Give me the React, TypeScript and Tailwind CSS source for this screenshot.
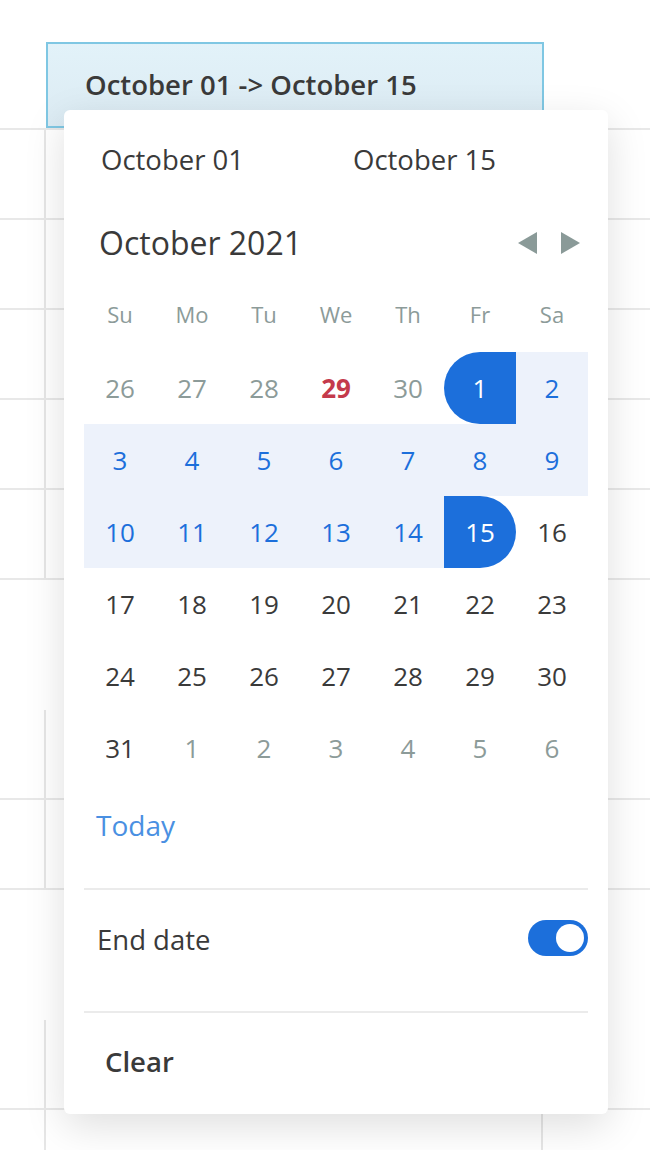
import { ReactNode } from "react"

type Day = {
  n: number
  tone: "muted" | "today" | "normal" | "range" | "start" | "end"
  bg?: boolean
}

const weekdays = ["Su", "Mo", "Tu", "We", "Th", "Fr", "Sa"]

const weeks: Day[][] = [
  [
    { n: 26, tone: "muted" },
    { n: 27, tone: "muted" },
    { n: 28, tone: "muted" },
    { n: 29, tone: "today" },
    { n: 30, tone: "muted" },
    { n: 1, tone: "start" },
    { n: 2, tone: "range", bg: true },
  ],
  [3, 4, 5, 6, 7, 8, 9].map((n) => ({ n, tone: "range" as const, bg: true })),
  [
    ...[10, 11, 12, 13, 14].map((n) => ({ n, tone: "range" as const, bg: true })),
    { n: 15, tone: "end" },
    { n: 16, tone: "normal" },
  ],
  [17, 18, 19, 20, 21, 22, 23].map((n) => ({ n, tone: "normal" as const })),
  [24, 25, 26, 27, 28, 29, 30].map((n) => ({ n, tone: "normal" as const })),
  [
    { n: 31, tone: "normal" },
    ...[1, 2, 3, 4, 5, 6].map((n) => ({ n, tone: "muted" as const })),
  ],
]

const toneClass = {
  muted: "text-[#8c9b99]",
  today: "text-[#c43a4b] font-bold",
  normal: "text-[#3a3a3a]",
  range: "text-[#1c6fdb]",
  start: "bg-[#1c6fdb] text-white rounded-l-full",
  end: "bg-[#1c6fdb] text-white rounded-r-full",
}

const Row = ({
  h,
  line,
  border,
  children,
}: {
  h: string
  line?: boolean
  border?: boolean
  children?: ReactNode
}) => (
  <div className={`flex ${h} ${border ? "border-b-2 border-[#e8e8e8]" : ""}`}>
    <div className={`w-[46px] shrink-0 ${line ? "border-r-2 border-[#e6e6e6]" : ""}`} />
    <div className={`w-[497px] shrink-0 ${line ? "border-r-2 border-[#e6e6e6]" : ""}`}>
      {children}
    </div>
  </div>
)

const App = () => {
  return (
    <div className="relative h-[1150px] w-[650px] overflow-hidden bg-white font-['Open_Sans',sans-serif]">
      {/* table behind the popup */}
      <div className="flex h-[130px] flex-col border-b-2 border-[#e8e8e8] pt-[42px]">
        <div className="ml-[46px] flex h-[88px] w-[498px] items-center border-2 border-[#7fc7e3] bg-gradient-to-b from-[#e2f2f9] to-[#dcebf3] pl-[37px]">
          <span className="text-[27.5px] font-semibold text-[#3a3a3a]">
            October 01 -&gt; October 15
          </span>
        </div>
      </div>
      <Row h="h-[90px]" line border />
      <Row h="h-[90px]" line border />
      <Row h="h-[90px]" line border />
      <Row h="h-[90px]" line border />
      <Row h="h-[90px]" line border />
      <Row h="h-[130px]" />
      <Row h="h-[90px]" line border />
      <Row h="h-[90px]" line border />
      <Row h="h-[130px]" />
      <Row h="h-[90px]" line border />
      <Row h="h-[40px]" line />

      {/* popup */}
      <div className="absolute left-[64px] top-[110px] flex h-[1004px] w-[544px] flex-col rounded-md bg-white px-5 shadow-[0_12px_40px_rgba(0,0,0,0.13)]">
        <div className="flex h-[100px] items-center pl-[17px] text-[27.5px] text-[#3a3a3a]">
          <span className="w-[252px]">October 01</span>
          <span>October 15</span>
        </div>
        <div className="flex h-[66px] items-center justify-between pl-[15px]">
          <span className="text-[32px] text-[#3a3a3a]">October 2021</span>
          <div className="flex items-center gap-[24px] pr-[8px]">
            <svg width="19" height="22" viewBox="0 0 19 22">
              <path d="M19 0 L0 11 L19 22 Z" fill="#8a9a98" />
            </svg>
            <svg width="19" height="22" viewBox="0 0 19 22">
              <path d="M0 0 L19 11 L0 22 Z" fill="#8a9a98" />
            </svg>
          </div>
        </div>
        <div className="grid h-[76px] grid-cols-7 items-center">
          {weekdays.map((d) => (
            <span key={d} className="text-center text-[22px] text-[#8c9b99]">
              {d}
            </span>
          ))}
        </div>
        <div className="flex flex-col">
          {weeks.map((week, i) => (
            <div key={i} className="grid h-[72px] grid-cols-7">
              {week.map((d, j) => (
                <div key={j} className={d.bg ? "bg-[#edf2fb]" : ""}>
                  <div
                    className={`flex h-[72px] items-center justify-center text-[26px] ${toneClass[d.tone]}`}
                  >
                    {d.n}
                  </div>
                </div>
              ))}
            </div>
          ))}
        </div>
        <div className="flex h-[106px] items-center border-b-2 border-[#ebebeb] pb-[22px] pl-[12px]">
          <span className="text-[28px] text-[#4a90e2]">Today</span>
        </div>
        <div className="flex h-[123px] items-start justify-between border-b-2 border-[#ebebeb] pl-[13px] pt-[30px]">
          <span className="text-[27.5px] leading-[40px] text-[#3a3a3a]">End date</span>
          <div className="flex h-[36px] w-[60px] items-center justify-end rounded-full bg-[#1c6fdb] p-[4px]">
            <div className="h-[28px] w-[28px] rounded-full bg-white" />
          </div>
        </div>
        <div className="flex h-[98px] items-center pl-[21px]">
          <span className="text-[27.5px] font-semibold text-[#3a3a3a]">Clear</span>
        </div>
      </div>
    </div>
  )
}

export default App
